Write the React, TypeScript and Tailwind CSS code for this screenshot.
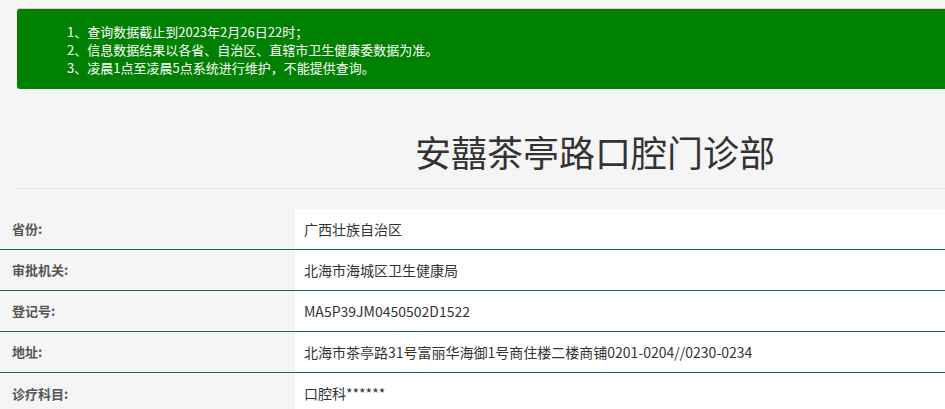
export default function App() {
  const rows: [string, string][] = [
    ["省份:", "广西壮族自治区"],
    ["审批机关:", "北海市海城区卫生健康局"],
    ["登记号:", "MA5P39JM0450502D1522"],
    ["地址:", "北海市茶亭路31号富丽华海御1号商住楼二楼商铺0201-0204//0230-0234"],
    ["诊疗科目:", "口腔科******"],
  ];
  return (
    <div className="w-[945px] h-[409px] overflow-hidden bg-[#f5f5f5] text-[#333]" style={{ fontFamily: '"Microsoft YaHei","Noto Sans CJK SC",sans-serif' }}>
      <div className="pt-[8px] pl-[17px] -mr-[20px]">
        <div className="bg-[#008000] border-t border-[#f2c4c8] rounded-[3px] h-[81px] pl-[50px] pt-[14px] text-white text-[13px] leading-[18px]">
          <div>1、查询数据截止到2023年2月26日22时；</div>
          <div>2、信息数据结果以各省、自治区、直辖市卫生健康委数据为准。</div>
          <div>3、凌晨1点至凌晨5点系统进行维护，不能提供查询。</div>
        </div>
      </div>
      <div className="ml-[15px] h-[100px] border-b border-[#e8e8e8] flex items-center">
        <div className="w-full text-center pl-[230px] text-[36px] text-[#333] pt-[24px]">安囍茶亭路口腔门诊部</div>
      </div>
      <div className="mt-[20px]">
        {rows.map(([k, v], i) => (
          <div key={i} className={`flex h-[41px] ${i < rows.length - 1 ? "border-b border-[#1d6b3e]" : ""}`}>
            <div className="w-[295px] pl-[12px] flex items-center text-[13px] font-bold text-[#555]">{k}</div>
            <div className="flex-1 bg-white pl-[9px] flex items-center text-[14px] text-[#333]">{v}</div>
          </div>
        ))}
      </div>
    </div>
  );
}
